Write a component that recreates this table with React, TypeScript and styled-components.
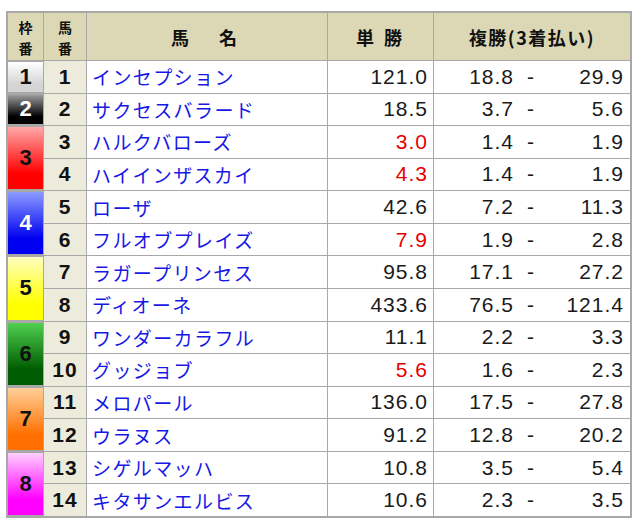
import styled, { createGlobalStyle } from "styled-components";

interface Horse {
  no: number;
  name: string;
  win: string;
  placeLow: string;
  placeHigh: string;
  hot?: boolean;
};

interface Waku {
  no: number;
  horses: Horse[];
};

const wakuColors: { [key: number]: { top: string; bottom: string; text: string } } = {
  1: { top: "#ffffff", bottom: "#d4d4d4", text: "#111" },
  2: { top: "#9a9a9a", bottom: "#000000", text: "#fff" },
  3: { top: "#ffa8a8", bottom: "#ff0000", text: "#111" },
  4: { top: "#8c9cff", bottom: "#0000f0", text: "#fff" },
  5: { top: "#ffffc0", bottom: "#ffff00", text: "#111" },
  6: { top: "#4fd04f", bottom: "#005c00", text: "#111" },
  7: { top: "#ffd09a", bottom: "#ff7000", text: "#111" },
  8: { top: "#ffd0ff", bottom: "#ff00ff", text: "#111" },
};

const data: Waku[] = [
  { no: 1, horses: [{ no: 1, name: "インセプション", win: "121.0", placeLow: "18.8", placeHigh: "29.9" }] },
  { no: 2, horses: [{ no: 2, name: "サクセスバラード", win: "18.5", placeLow: "3.7", placeHigh: "5.6" }] },
  {
    no: 3,
    horses: [
      { no: 3, name: "ハルクバローズ", win: "3.0", placeLow: "1.4", placeHigh: "1.9", hot: true },
      { no: 4, name: "ハイインザスカイ", win: "4.3", placeLow: "1.4", placeHigh: "1.9", hot: true },
    ],
  },
  {
    no: 4,
    horses: [
      { no: 5, name: "ローザ", win: "42.6", placeLow: "7.2", placeHigh: "11.3" },
      { no: 6, name: "フルオブプレイズ", win: "7.9", placeLow: "1.9", placeHigh: "2.8", hot: true },
    ],
  },
  {
    no: 5,
    horses: [
      { no: 7, name: "ラガープリンセス", win: "95.8", placeLow: "17.1", placeHigh: "27.2" },
      { no: 8, name: "ディオーネ", win: "433.6", placeLow: "76.5", placeHigh: "121.4" },
    ],
  },
  {
    no: 6,
    horses: [
      { no: 9, name: "ワンダーカラフル", win: "11.1", placeLow: "2.2", placeHigh: "3.3" },
      { no: 10, name: "グッジョブ", win: "5.6", placeLow: "1.6", placeHigh: "2.3", hot: true },
    ],
  },
  {
    no: 7,
    horses: [
      { no: 11, name: "メロパール", win: "136.0", placeLow: "17.5", placeHigh: "27.8" },
      { no: 12, name: "ウラヌス", win: "91.2", placeLow: "12.8", placeHigh: "20.2" },
    ],
  },
  {
    no: 8,
    horses: [
      { no: 13, name: "シゲルマッハ", win: "10.8", placeLow: "3.5", placeHigh: "5.4" },
      { no: 14, name: "キタサンエルビス", win: "10.6", placeLow: "2.3", placeHigh: "3.5" },
    ],
  },
];

const App = () => {
  return (
    <>
      <GlobalStyle />
      <Table>
        <HeadCell><Stack><span>枠</span><span>番</span></Stack></HeadCell>
        <HeadCell><Stack><span>馬</span><span>番</span></Stack></HeadCell>
        <HeadCell $spacing={6}>馬　名</HeadCell>
        <HeadCell $spacing={3}>単 勝</HeadCell>
        <HeadCell $spacing={1.5}>複勝(3着払い)</HeadCell>
        {data.map((waku) => {
          const c = wakuColors[waku.no];
          return [
            <WakuCell
              key={`w${waku.no}`}
              $span={waku.horses.length}
              $top={c.top}
              $bottom={c.bottom}
              $text={c.text}
            >
              {waku.no}
            </WakuCell>,
            ...waku.horses.map((h) => [
              <NumberCell key={`n${h.no}`}>{h.no}</NumberCell>,
              <NameCell key={`m${h.no}`}>{h.name}</NameCell>,
              <OddsCell key={`o${h.no}`} $hot={h.hot}>{h.win}</OddsCell>,
              <PlaceCell key={`p${h.no}`}>
                <span className="low">{h.placeLow}</span>
                <span className="dash">-</span>
                <span className="high">{h.placeHigh}</span>
              </PlaceCell>,
            ]),
          ];
        })}
      </Table>
    </>
  );
};

export default App;

const GlobalStyle = createGlobalStyle`
  html, body {
    margin: 0;
    padding: 0;
    background: #ffffff;
  }
  body {
    font-family: "Noto Sans CJK JP", "Noto Sans", sans-serif;
  }
`;

const Table = styled.div`
  box-sizing: border-box;
  display: grid;
  grid-template-columns: 35px 42px 240px 105px 196px;
  grid-template-rows: 47px repeat(14, 1fr);
  gap: 1px;
  width: 626px;
  height: 507px;
  margin: 11px 0 0 6px;
  padding: 2px;
  background-color: #a8a8a8;
`;

const HeadCell = styled.div<{ $spacing?: number }>`
  display: flex;
  align-items: center;
  justify-content: center;
  background-color: #dcd8b6;
  color: #111;
  font-family: "Noto Sans CJK JP", sans-serif;
  font-size: 18px;
  font-weight: 700;
  letter-spacing: ${(p) => p.$spacing ?? 0}px;
  white-space: pre;
`;

const Stack = styled.div`
  display: flex;
  flex-direction: column;
  align-items: center;
  font-size: 14px;
  line-height: 20.5px;
  letter-spacing: 0;
  padding-top: 2px;
`;

const WakuCell = styled.div<{ $span: number; $top: string; $bottom: string; $text: string }>`
  grid-row: span ${(p) => p.$span};
  display: flex;
  align-items: center;
  justify-content: center;
  margin: 1px 0;
  background: linear-gradient(to bottom, ${(p) => p.$top}, ${(p) => p.$bottom} 75%);
  color: ${(p) => p.$text};
  font-family: "Liberation Sans", Arial, sans-serif;
  font-size: 22px;
  font-weight: 700;
`;

const NumberCell = styled.div`
  display: flex;
  align-items: center;
  justify-content: center;
  background-color: #ecebdc;
  color: #111;
  font-family: "Liberation Sans", Arial, sans-serif;
  font-size: 21px;
  font-weight: 700;
  letter-spacing: 1px;
`;

const NameCell = styled.div`
  display: flex;
  align-items: center;
  padding-left: 5px;
  background-color: #ffffff;
  color: #1717e6;
  font-family: "Noto Sans CJK JP", sans-serif;
  font-size: 19px;
  letter-spacing: 1.4px;
`;

const OddsCell = styled.div<{ $hot?: boolean }>`
  display: flex;
  align-items: center;
  justify-content: flex-end;
  padding-right: 5px;
  background-color: #ffffff;
  color: ${(p) => (p.$hot ? "#e60000" : "#1a1a1a")};
  font-family: "Liberation Sans", Arial, sans-serif;
  font-size: 21px;
  letter-spacing: 1px;
`;

const PlaceCell = styled.div`
  display: flex;
  align-items: center;
  background-color: #ffffff;
  color: #1a1a1a;
  font-family: "Liberation Sans", Arial, sans-serif;
  font-size: 21px;
  letter-spacing: 1px;

  .low {
    width: 80px;
    text-align: right;
  }
  .dash {
    width: 34px;
    text-align: center;
  }
  .high {
    flex: 1;
    text-align: right;
    padding-right: 6px;
  }
`;
